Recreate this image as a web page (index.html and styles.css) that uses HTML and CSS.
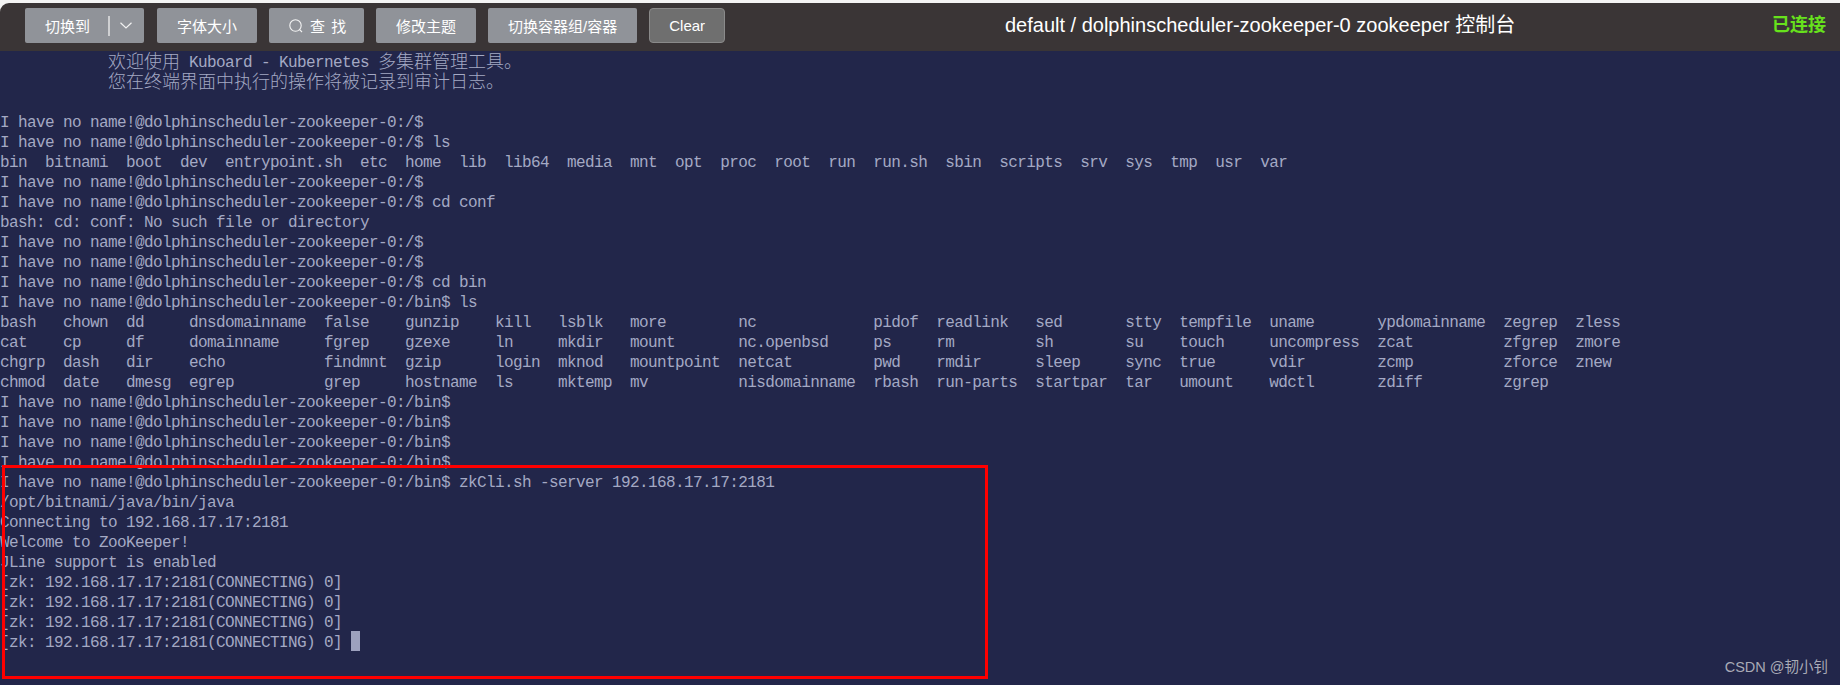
FILE: index.html
```html
<!DOCTYPE html>
<html lang="zh-CN">
<head>
<meta charset="utf-8">
<title>default / dolphinscheduler-zookeeper-0 zookeeper 控制台</title>
<link rel="stylesheet" href="styles.css">
</head>
<body>
<div class="app">
  <header class="toolbar">
    <div class="btn split">
      <span class="split-label">切换到</span>
      <span class="split-divider"></span>
      <svg class="chevron" width="12" height="7" viewBox="0 0 12 7"><path d="M0.5 0.8 L6 6 L11.5 0.8" fill="none" stroke="#f2f2f2" stroke-width="1.2"/></svg>
    </div>
    <div class="btn">字体大小</div>
    <div class="btn search">
      <svg class="search-icon" width="14" height="14" viewBox="0 0 14 14"><circle cx="6.5" cy="6.5" r="5.7" fill="none" stroke="#f4f4f4" stroke-width="1.1"/><path d="M10.6 10.6 L13 13" fill="none" stroke="#f4f4f4" stroke-width="1.1"/></svg>
      <span class="search-text">查 找</span>
    </div>
    <div class="btn">修改主题</div>
    <div class="btn">切换容器组/容器</div>
    <div class="btn clear">Clear</div>
    <div class="title">default / dolphinscheduler-zookeeper-0 zookeeper 控制台</div>
    <div class="status">已连接</div>
  </header>
  <main class="terminal">
<div class="line">            <span class="cjk">欢迎使用</span> Kuboard - Kubernetes <span class="cjk">多集群管理工具。</span></div>
<div class="line">            <span class="cjk">您在终端界面中执行的操作将被记录到审计日志。</span></div>
<div class="line"></div>
<div class="line">I have no name!@dolphinscheduler-zookeeper-0:/$</div>
<div class="line">I have no name!@dolphinscheduler-zookeeper-0:/$ ls</div>
<div class="line">bin  bitnami  boot  dev  entrypoint.sh  etc  home  lib  lib64  media  mnt  opt  proc  root  run  run.sh  sbin  scripts  srv  sys  tmp  usr  var</div>
<div class="line">I have no name!@dolphinscheduler-zookeeper-0:/$</div>
<div class="line">I have no name!@dolphinscheduler-zookeeper-0:/$ cd conf</div>
<div class="line">bash: cd: conf: No such file or directory</div>
<div class="line">I have no name!@dolphinscheduler-zookeeper-0:/$</div>
<div class="line">I have no name!@dolphinscheduler-zookeeper-0:/$</div>
<div class="line">I have no name!@dolphinscheduler-zookeeper-0:/$ cd bin</div>
<div class="line">I have no name!@dolphinscheduler-zookeeper-0:/bin$ ls</div>
<div class="line">bash   chown  dd     dnsdomainname  false    gunzip    kill   lsblk   more        nc             pidof  readlink   sed       stty  tempfile  uname       ypdomainname  zegrep  zless</div>
<div class="line">cat    cp     df     domainname     fgrep    gzexe     ln     mkdir   mount       nc.openbsd     ps     rm         sh        su    touch     uncompress  zcat          zfgrep  zmore</div>
<div class="line">chgrp  dash   dir    echo           findmnt  gzip      login  mknod   mountpoint  netcat         pwd    rmdir      sleep     sync  true      vdir        zcmp          zforce  znew</div>
<div class="line">chmod  date   dmesg  egrep          grep     hostname  ls     mktemp  mv          nisdomainname  rbash  run-parts  startpar  tar   umount    wdctl       zdiff         zgrep</div>
<div class="line">I have no name!@dolphinscheduler-zookeeper-0:/bin$</div>
<div class="line">I have no name!@dolphinscheduler-zookeeper-0:/bin$</div>
<div class="line">I have no name!@dolphinscheduler-zookeeper-0:/bin$</div>
<div class="line">I have no name!@dolphinscheduler-zookeeper-0:/bin$</div>
<div class="line">I have no name!@dolphinscheduler-zookeeper-0:/bin$ zkCli.sh -server 192.168.17.17:2181</div>
<div class="line">/opt/bitnami/java/bin/java</div>
<div class="line">Connecting to 192.168.17.17:2181</div>
<div class="line">Welcome to ZooKeeper!</div>
<div class="line">JLine support is enabled</div>
<div class="line">[zk: 192.168.17.17:2181(CONNECTING) 0]</div>
<div class="line">[zk: 192.168.17.17:2181(CONNECTING) 0]</div>
<div class="line">[zk: 192.168.17.17:2181(CONNECTING) 0]</div>
<div class="line">[zk: 192.168.17.17:2181(CONNECTING) 0] <span class="cursor"></span></div>
  </main>
  <div class="highlight"></div>
  <div class="watermark">CSDN @韧小钊</div>
</div>
</body>
</html>
```

FILE: styles.css
```css
html, body {
  margin: 0;
  height: 100%;
  overflow: hidden;
  background: #f4f4f4;
}

.app {
  position: relative;
  height: 685px;
  padding-top: 3px;
  box-sizing: border-box;
  display: flex;
  flex-direction: column;
}

.toolbar {
  flex: none;
  display: flex;
  align-items: flex-start;
  height: 48px;
  box-sizing: border-box;
  padding: 5px 14px 0 25px;
  background: #3a3536;
  border-top-left-radius: 9px;
  font-family: "Liberation Sans", "Noto Sans CJK SC", sans-serif;
}

.btn {
  flex: none;
  display: flex;
  align-items: center;
  height: 35px;
  padding: 0 20px;
  margin-right: 12px;
  background: #909399;
  border-radius: 2px;
  color: #fff;
  font-size: 15px;
  white-space: nowrap;
}

.split {
  width: 119px;
  box-sizing: border-box;
  padding-right: 0;
  margin-right: 13px;
}

.split-label {
  flex: none;
  width: 63px;
}

.split-divider {
  flex: none;
  width: 2px;
  height: 20px;
  background: #cfd0d2;
}

.chevron {
  flex: none;
  margin-left: 10px;
}

.search {
  width: 95px;
  box-sizing: border-box;
  padding-right: 0;
}

.search-icon {
  flex: none;
  margin-right: 7px;
}

.search-text {
  letter-spacing: 1px;
}

.clear {
  background: #6f6f6f;
  border: 1px solid #8a8a8a;
  border-radius: 4px;
  box-sizing: border-box;
  width: 76px;
  padding: 0;
  justify-content: center;
}

.title {
  flex: 1;
  padding-left: 11px;
  line-height: 35px;
  text-align: center;
  color: #fff;
  font-size: 20px;
  white-space: nowrap;
}

.status {
  flex: none;
  line-height: 35px;
  color: #67e21c;
  font-size: 18px;
  font-weight: 700;
}

.terminal {
  flex: 1;
  background: #22264a;
  color: #a4a9c4;
  font-family: "Liberation Mono", "Noto Sans CJK SC", monospace;
  font-size: 16px;
  letter-spacing: -0.6px;
}

.line {
  height: 20px;
  line-height: 24px;
  white-space: pre;
}

.cjk {
  font-family: "Noto Sans CJK SC", sans-serif;
  font-size: 18px;
  letter-spacing: 0;
  line-height: 0;
  font-weight: 300;
  vertical-align: -1px;
}

.cursor {
  display: inline-block;
  width: 9px;
  height: 20px;
  background: #9da1be;
  vertical-align: top;
}

.highlight {
  position: absolute;
  left: 2px;
  top: 465px;
  width: 986px;
  height: 214px;
  box-sizing: border-box;
  border: 3px solid #fe0000;
}

.watermark {
  position: absolute;
  right: 12px;
  top: 657px;
  line-height: 20px;
  color: #a9abb6;
  font-size: 14.5px;
  font-family: "Liberation Sans", "Noto Sans CJK SC", sans-serif;
}
```
